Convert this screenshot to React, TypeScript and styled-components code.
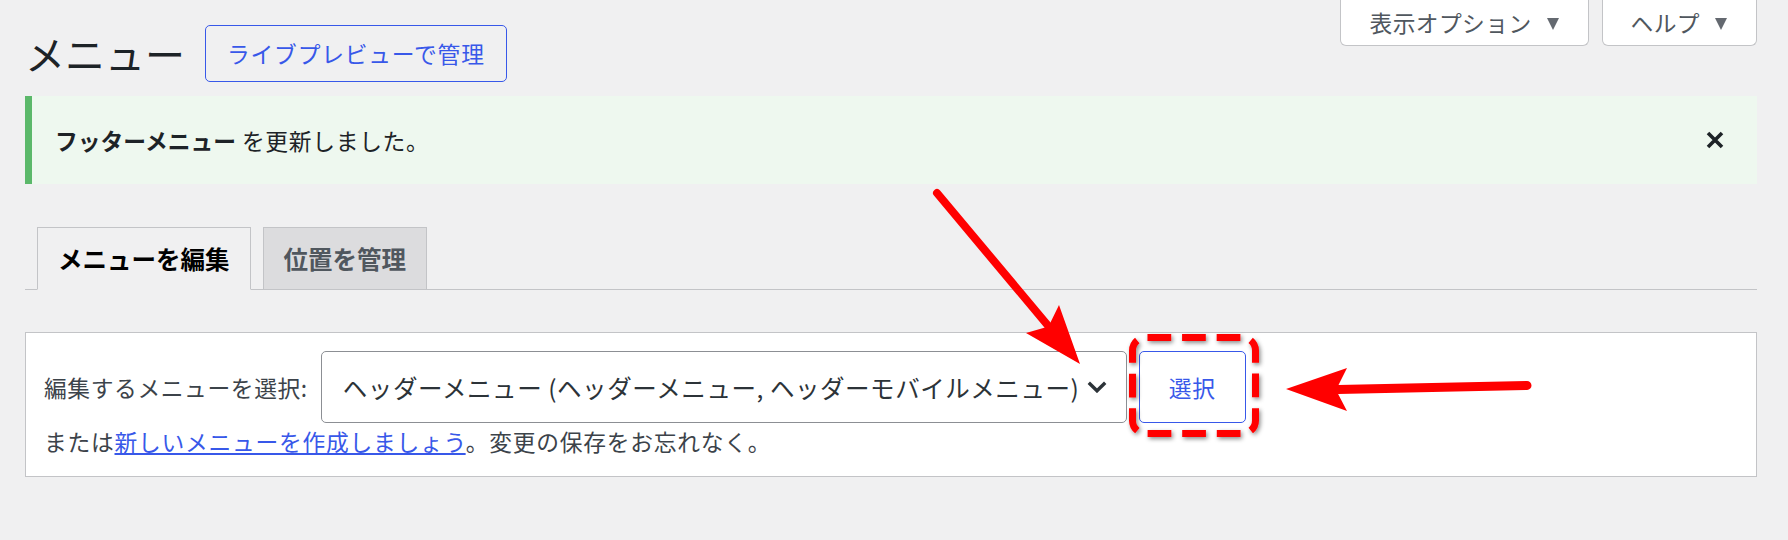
import styled, { createGlobalStyle } from "styled-components";

const GlobalStyle = createGlobalStyle`
  html, body {
    margin: 0;
    padding: 0;
  }
  body {
    background: #f0f0f1;
    font-family: "Noto Sans CJK JP", "Noto Sans", sans-serif;
    color: #3c434a;
    overflow: hidden;
  }
`;

const Page = styled.div`
  position: relative;
  width: 1788px;
  height: 540px;
  box-sizing: border-box;
  padding: 0 31px 0 25px;
`;

const Header = styled.header`
  display: flex;
  justify-content: space-between;
  align-items: flex-start;
`;

const TitleGroup = styled.div`
  display: flex;
  align-items: center;
  gap: 20px;
  padding-top: 25px;
`;

const Title = styled.h1`
  margin: 0;
  font-size: 40px;
  font-weight: 400;
  line-height: 57px;
  color: #1d2327;
`;

const OutlineButton = styled.a`
  display: inline-flex;
  align-items: center;
  height: 57px;
  box-sizing: border-box;
  padding: 0 21px;
  border: 1px solid #3858e9;
  border-radius: 5px;
  color: #3858e9;
  font-size: 22.75px;
  letter-spacing: 0.8px;
  text-decoration: none;
`;

const MetaLinks = styled.div`
  display: flex;
  gap: 13px;
`;

const MetaToggle = styled.button`
  display: flex;
  align-items: center;
  height: 46px;
  box-sizing: border-box;
  padding: 0 29px 0 28px;
  background: #fff;
  border: 1px solid #c3c4c7;
  border-top: none;
  border-radius: 0 0 6px 6px;
  font-family: inherit;
  font-size: 22.75px;
  letter-spacing: 0.4px;
  color: #50575e;
`;

const Caret = styled.span`
  width: 0;
  height: 0;
  margin: 3px 0 0 15px;
  border-left: 6.5px solid transparent;
  border-right: 6.5px solid transparent;
  border-top: 12px solid #646970;
`;

const Notice = styled.div`
  margin-top: 14px;
  height: 88px;
  box-sizing: border-box;
  display: flex;
  align-items: center;
  justify-content: space-between;
  padding: 0 33px 0 23px;
  background: #eef8ef;
  border-left: 7px solid #5bb86a;
  font-size: 22.75px;
  color: #1d2327;
`;

const NoticeText = styled.p`
  margin: 0;
  letter-spacing: 0.7px;

  b {
    font-weight: 700;
    letter-spacing: 0;
  }
`;

const Dismiss = styled.button`
  display: flex;
  padding: 0;
  border: none;
  background: none;
`;

const TabBar = styled.nav`
  margin-top: 43px;
  height: 62px;
  display: flex;
  align-items: flex-start;
  gap: 12px;
  padding-left: 12px;
  border-bottom: 1px solid #c3c4c7;
`;

const Tab = styled.a<{ $active?: boolean }>`
  display: flex;
  align-items: center;
  height: 63px;
  box-sizing: border-box;
  margin-bottom: -1px;
  padding: 0 20px;
  border: 1px solid #c3c4c7;
  border-bottom-color: ${({ $active }) => ($active ? "#f0f0f1" : "#c3c4c7")};
  background: ${({ $active }) => ($active ? "#f0f0f1" : "#dcdcde")};
  color: ${({ $active }) => ($active ? "#000" : "#50575e")};
  font-size: 24.5px;
  font-weight: 700;
  text-decoration: none;
`;

const ManageBox = styled.section`
  margin-top: 42px;
  padding: 18px;
  background: #fff;
  border: 1px solid #c3c4c7;
`;

const SelectRow = styled.div`
  display: flex;
  align-items: center;
`;

const Label = styled.label`
  margin-right: 13px;
  font-size: 22.75px;
  letter-spacing: 0.6px;
  color: #3c434a;
`;

const SelectBox = styled.div`
  width: 806px;
  height: 72px;
  box-sizing: border-box;
  display: flex;
  align-items: center;
  justify-content: space-between;
  gap: 6px;
  padding: 0 19px 0 21px;
  border: 1px solid #8c8f94;
  border-radius: 5px;
  background: #fff;
  font-size: 24.5px;
  letter-spacing: 0.55px;
  color: #2c3338;
  white-space: nowrap;

  svg {
    flex-shrink: 0;
  }
`;

const SelectButton = styled.button`
  margin-left: 12px;
  width: 107px;
  height: 72px;
  border: 1px solid #3858e9;
  border-radius: 5px;
  background: #fff;
  color: #3858e9;
  font-family: inherit;
  font-size: 22.75px;
  letter-spacing: 0.8px;
`;

const HelpLine = styled.p`
  margin: 3px 0 0;
  font-size: 22.75px;
  line-height: 32px;
  letter-spacing: 0.75px;
  color: #3c434a;

  a {
    color: #3858e9;
    text-decoration: underline;
  }
`;

const Overlay = styled.svg`
  position: absolute;
  left: 0;
  top: 0;
  pointer-events: none;
`;

function Chevron() {
  return (
    <svg width="20" height="12" viewBox="0 0 20 12">
      <polyline
        points="1.8,1.8 10,9.8 18.2,1.8"
        fill="none"
        stroke="#2c3338"
        strokeWidth="3.4"
      />
    </svg>
  );
}

function CloseIcon() {
  return (
    <svg width="18" height="18" viewBox="0 0 18 18">
      <path d="M2 2 L16 16 M16 2 L2 16" stroke="#1d2327" strokeWidth="3.6" />
    </svg>
  );
}

function Annotations() {
  return (
    <Overlay width="1788" height="540" viewBox="0 0 1788 540">
      <defs>
        <filter id="shade" x="-20%" y="-20%" width="140%" height="140%">
          <feDropShadow dx="1.5" dy="2" stdDeviation="2" floodColor="#000" floodOpacity="0.45" />
        </filter>
      </defs>
      <rect
        x="1132.5"
        y="337.5"
        width="123"
        height="96"
        rx="13"
        fill="none"
        stroke="#ff0000"
        strokeWidth="7"
        pathLength={420}
        strokeDasharray="24 11"
        strokeDashoffset="-2"
        filter="url(#shade)"
      />
      <line x1="937" y1="193" x2="1050" y2="328" stroke="#ff0000" strokeWidth="8" strokeLinecap="round" />
      <polygon points="1080,364 1059,305 1048.5,326.5 1026,333" fill="#ff0000" />
      <line x1="1527" y1="385.5" x2="1338" y2="389.5" stroke="#ff0000" strokeWidth="9" strokeLinecap="round" />
      <polygon points="1286,389 1347,368 1336,390 1347,411" fill="#ff0000" />
    </Overlay>
  );
}

export default function App() {
  return (
    <>
      <GlobalStyle />
      <Page>
        <Header>
          <TitleGroup>
            <Title>メニュー</Title>
            <OutlineButton href="#">ライブプレビューで管理</OutlineButton>
          </TitleGroup>
          <MetaLinks>
            <MetaToggle>
              表示オプション
              <Caret />
            </MetaToggle>
            <MetaToggle>
              ヘルプ
              <Caret />
            </MetaToggle>
          </MetaLinks>
        </Header>

        <Notice>
          <NoticeText>
            <b>フッターメニュー</b> を更新しました。
          </NoticeText>
          <Dismiss aria-label="この通知を非表示にする">
            <CloseIcon />
          </Dismiss>
        </Notice>

        <TabBar>
          <Tab $active href="#">メニューを編集</Tab>
          <Tab href="#">位置を管理</Tab>
        </TabBar>

        <ManageBox>
          <SelectRow>
            <Label>編集するメニューを選択:</Label>
            <SelectBox>
              <span>ヘッダーメニュー (ヘッダーメニュー, ヘッダーモバイルメニュー)</span>
              <Chevron />
            </SelectBox>
            <SelectButton>選択</SelectButton>
          </SelectRow>
          <HelpLine>
            または<a href="#">新しいメニューを作成しましょう</a>。変更の保存をお忘れなく。
          </HelpLine>
        </ManageBox>

        <Annotations />
      </Page>
    </>
  );
}
